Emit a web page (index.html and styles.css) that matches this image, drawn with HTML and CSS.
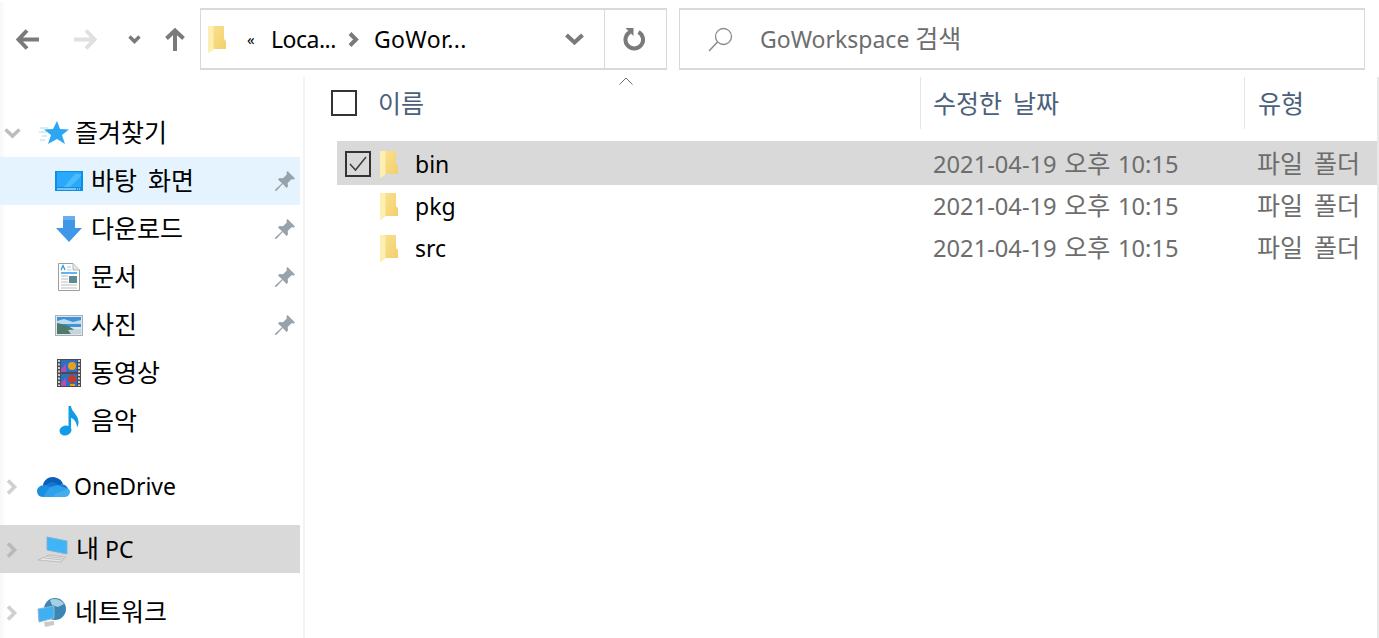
FILE: index.html
```html
<!DOCTYPE html>
<html lang="ko">
<head>
    <meta charset="UTF-8">
    <title>GoWorkspace</title>
    <link rel="stylesheet" href="styles.css">
</head>
<body>
    <svg class="defs" width="0" height="0">
        <defs>
            <linearGradient id="folderFill" x1="0" y1="0" x2="1" y2="1">
                <stop offset="0" stop-color="#f9e08f"/>
                <stop offset="1" stop-color="#f3cf6b"/>
            </linearGradient>
            <symbol id="folder" viewBox="0 0 18 27">
                <path d="M5 0H16V13L18 15V23H5Z" fill="url(#folderFill)"/>
                <path d="M0 0H5.500V23.500L1 27L0 26Z" fill="#fdeeb2"/>
            </symbol>
            <symbol id="pin" viewBox="0 0 20 20">
                <path d="M12.500 0L20 7.500L18.200 8.700L16.800 8L12.700 12L13 15.500L11.500 17L7.800 12.900L1.500 19.800L0 20L.2 18.500L7 12.200L3 8.500L4.500 7L8 7.300L12 3.200L11.300 1.800Z" fill="#98a2ab"/>
            </symbol>
        </defs>
    </svg>

    <div class="window">
        <div class="toolbar">
            <div class="nav">
                <span class="nav-btn nav-back">
                    <svg width="23" height="21" viewBox="0 0 23 21"><path d="M11 1.500L2.500 10.500L11 19.500M3 10.500H23" fill="none" stroke="#7a7a7a" stroke-width="4"/></svg>
                </span>
                <span class="nav-btn nav-forward">
                    <svg width="23" height="21" viewBox="0 0 23 21"><path d="M12 1.500L20.500 10.500L12 19.500M20 10.500H0" fill="none" stroke="#e0e0e0" stroke-width="4"/></svg>
                </span>
                <span class="nav-btn nav-recent">
                    <svg width="13" height="9" viewBox="0 0 13 9"><path d="M1.500 1.500L6.500 6.500L11.500 1.500" fill="none" stroke="#7a7a7a" stroke-width="3.400"/></svg>
                </span>
                <span class="nav-btn nav-up">
                    <svg width="20" height="23" viewBox="0 0 20 23"><path d="M1.500 10.500L10 2.500L18.500 10.500M10 3V23" fill="none" stroke="#7a7a7a" stroke-width="4"/></svg>
                </span>
            </div>

            <div class="address">
                <svg class="address-folder" width="18" height="27"><use href="#folder"/></svg>
                <span class="crumb-more">«</span>
                <span class="crumb crumb-first">Loca...</span>
                <svg class="crumb-sep" width="11" height="15" viewBox="0 0 11 15"><path d="M2 1.500L8 7.500L2 13.500" fill="none" stroke="#7a7a7a" stroke-width="4"/></svg>
                <span class="crumb crumb-last">GoWor...</span>
                <svg class="address-drop" width="19" height="12" viewBox="0 0 19 12"><path d="M1.500 2L9.500 9.500L17.500 2" fill="none" stroke="#7a7a7a" stroke-width="4"/></svg>
                <span class="refresh">
                    <svg width="22" height="24" viewBox="0 0 22 24"><path d="M7 5A8.800 8.800 0 1 0 15.500 5" fill="none" stroke="#7a7a7a" stroke-width="4"/><path d="M2.500 1H10.500V9Z" fill="#7a7a7a"/></svg>
                </span>
            </div>

            <div class="search">
                <svg width="26" height="25" viewBox="0 0 26 25"><circle cx="15.500" cy="9.500" r="8" fill="none" stroke="#8a8a8a" stroke-width="1.300"/><path d="M9.500 15L1 24" stroke="#8a8a8a" stroke-width="1.500"/></svg>
                <span class="search-text">GoWorkspace <span class="ko">검색</span></span>
            </div>
        </div>

        <div class="main">
            <nav class="sidebar">
                <div class="side-row side-top side-first">
                    <svg class="expander" width="17" height="11" viewBox="0 0 17 11"><path d="M1.500 1.500L8.500 8L15.500 1.500" fill="none" stroke="#bdbdbd" stroke-width="3.500"/></svg>
                    <svg class="side-icon icon-star" width="30" height="24" viewBox="0 0 30 24">
                        <path d="M1 7H9M0 11H8M3 15H8M1 19H6" stroke="#a9dcf8" stroke-width="1"/>
                        <path d="M18 0L21 8L30 8.500L23 14L26 23L18 18L9 23L12 14L5 8.500L14 8Z" fill="#2ea7f2"/>
                    </svg>
                    <span><span class="ko">즐겨찾기</span></span>
                </div>
                <div class="side-row side-child is-hover">
                    <svg class="side-icon" width="28" height="20" viewBox="0 0 28 20">
                        <rect width="28" height="20" fill="#0d8fe8"/>
                        <path d="M2 1H26V16H2Z" fill="#2aa9fb"/>
                        <path d="M9 16L20 3H26V5L15 16Z" fill="#4cbcfd"/>
                        <path d="M2 18H26" stroke="#e8f6ff" stroke-width="1" stroke-dasharray="19 1 1 1 1 1"/>
                    </svg>
                    <span><span class="ko">바탕 화면</span></span>
                    <svg class="pin" width="20" height="20"><use href="#pin"/></svg>
                </div>
                <div class="side-row side-child">
                    <svg class="side-icon" width="28" height="26" viewBox="0 0 26 26">
                        <path d="M7 0H19V12H26L13 26L0 12H7Z" fill="#3f97e8"/>
                        <path d="M7 0H19V4H7Z" fill="#66aeee"/>
                    </svg>
                    <span><span class="ko">다운로드</span></span>
                    <svg class="pin" width="20" height="20"><use href="#pin"/></svg>
                </div>
                <div class="side-row side-child">
                    <svg class="side-icon icon-doc" width="22" height="28" viewBox="0 0 22 28">
                        <path d="M.5 .5H15L21.500 7V27.500H.5Z" fill="#fff" stroke="#9d9d9d"/>
                        <path d="M15 .5V7H21.500" fill="#e6e6e6" stroke="#b5b5b5"/>
                        <path d="M3 10H19" stroke="#2e9be8" stroke-width="1.500"/>
                        <path d="M3 7L5 2.500L7 7" fill="none" stroke="#2e9be8" stroke-width="1.300"/>
                        <path d="M9 4H13M9 7H13" stroke="#9fcdef"/>
                        <path d="M3 13H10M3 16H10M3 19H10M3 22H19M3 25H19" stroke="#bdbdbd"/>
                        <rect x="11" y="13" width="8" height="7" fill="#5f8a93"/>
                    </svg>
                    <span><span class="ko">문서</span></span>
                    <svg class="pin" width="20" height="20"><use href="#pin"/></svg>
                </div>
                <div class="side-row side-child">
                    <svg class="side-icon" width="28" height="21" viewBox="0 0 28 21">
                        <rect x=".5" y=".5" width="27" height="20" fill="#dfe5e9" stroke="#a9b1b7"/>
                        <rect x="2" y="2" width="24" height="10" fill="#3f93d6"/>
                        <path d="M2 6L9 4L18 7L26 5V9H2Z" fill="#bcdcf0"/>
                        <path d="M2 8L11 10L20 15L26 15V19H2Z" fill="#4d7a6c"/>
                        <path d="M13 15L26 14V19H16Z" fill="#c4d5dc"/>
                    </svg>
                    <span><span class="ko">사진</span></span>
                    <svg class="pin" width="20" height="20"><use href="#pin"/></svg>
                </div>
                <div class="side-row side-child">
                    <svg class="side-icon icon-film" width="24" height="28" viewBox="0 0 24 28">
                        <rect width="24" height="28" fill="#4b4b4b"/>
                        <path d="M2 1V27M22 1V27" stroke="#cfcfcf" stroke-width="2" stroke-dasharray="2 1.500"/>
                        <rect x="4" y="1" width="16" height="12" fill="#2c6fc4"/>
                        <rect x="4" y="15" width="16" height="12" fill="#2c6fc4"/>
                        <circle cx="15" cy="7" r="4" fill="#e5a024"/>
                        <circle cx="15" cy="20" r="4" fill="#c9382b"/>
                        <path d="M4 10L9 5V13H4Z" fill="#b24fb5"/>
                        <path d="M4 24L9 19V27H4Z" fill="#b24fb5"/>
                        <path d="M13 25H18V27H13Z" fill="#e5a024"/>
                    </svg>
                    <span><span class="ko">동영상</span></span>
                </div>
                <div class="side-row side-child">
                    <svg class="side-icon icon-note" width="20" height="30" viewBox="0 0 20 30">
                        <ellipse cx="6.500" cy="24.500" rx="6" ry="5" fill="#0f9de8" transform="rotate(-15 6.500 24.500)"/>
                        <path d="M9.500 0H12C12 5 19.500 9 19.500 16C19.500 18 19 20 18 21.500C18 17 15.500 13 12 12V25H9.500Z" fill="#0f9de8"/>
                    </svg>
                    <span><span class="ko">음악</span></span>
                </div>

                <div class="side-row side-top side-group side-group-first">
                    <svg class="expander expander-right" width="12" height="16" viewBox="0 0 12 16"><path d="M2 1.500L8.500 8L2 14.500" fill="none" stroke="#d0d0d0" stroke-width="3.600"/></svg>
                    <svg class="side-icon icon-cloud" width="33" height="21" viewBox="0 0 33 21">
                        <path d="M6 9C7 3 14 -1 20 2C23 3 25 5 26 8L12 14L6 11Z" fill="#0a5fb8"/>
                        <path d="M10 8C14 5 19 6 21 9C25 7 30 9 31 13L17 18L7 12Z" fill="#0f78d4"/>
                        <path d="M8 9C3 9 0 12 0 15C0 18 2 21 6 21H16L21 13L13 11C12 10 10 9 8 9Z" fill="#1b8ee0"/>
                        <path d="M6 21H28C31 21 33 18 33 15.500C33 14 32 13 31 12.500L21 9L13 11Z" fill="#31a4ec" opacity=".9"/>
                    </svg>
                    <span>OneDrive</span>
                </div>
                <div class="side-row side-top side-group is-selected">
                    <svg class="expander expander-right" width="12" height="16" viewBox="0 0 12 16"><path d="M2 1.500L8.500 8L2 14.500" fill="none" stroke="#b9b9b9" stroke-width="3.600"/></svg>
                    <svg class="side-icon" width="33" height="28" viewBox="0 0 33 28">
                        <path d="M10 2L30 6V19L10 15Z" fill="#3fb4f7" stroke="#7fb3d1"/>
                        <path d="M12 20L29 22L24 27L1 25Z" fill="#e9e9e9" stroke="#b5b5b5" stroke-width=".8"/>
                        <path d="M7 23L25 25M10 21.500L27 23.500" stroke="#b5b5b5" stroke-width=".8"/>
                    </svg>
                    <span><span class="ko">내</span> PC</span>
                </div>
                <div class="side-row side-top side-group">
                    <svg class="expander expander-right" width="12" height="16" viewBox="0 0 12 16"><path d="M2 1.500L8.500 8L2 14.500" fill="none" stroke="#d0d0d0" stroke-width="3.600"/></svg>
                    <svg class="side-icon icon-net" width="30" height="29" viewBox="0 0 30 29">
                        <circle cx="18" cy="11" r="11" fill="#3c86b3"/>
                        <path d="M13 2C17 0 24 1 27 6L21 9L15 7Z" fill="#a7cfe4"/>
                        <path d="M1 11L17 8V20L2 24Z" fill="#3fb0f2" stroke="#8fb7cf"/>
                        <path d="M7 24L17 23V27L8 29Z" fill="#c9c9c9"/>
                    </svg>
                    <span><span class="ko">네트워크</span></span>
                </div>
            </nav>

            <section class="content">
                <svg class="sort-caret" width="14" height="8" viewBox="0 0 14 8"><path d="M.5 7.500L7 1L13.500 7.500" fill="none" stroke="#6e6e6e"/></svg>
                <div class="file-header">
                    <span class="check-col"><span class="checkbox"></span></span>
                    <span class="col col-name"><span class="ko">이름</span></span>
                    <span class="col col-date"><span class="ko">수정한 날짜</span></span>
                    <span class="col col-type"><span class="ko">유형</span></span>
                </div>
                <div class="file-list">
                    <div class="file-row is-selected">
                        <span class="checkbox checkbox-row">
                            <svg width="22" height="22" viewBox="0 0 22 22"><path d="M3 11L8.500 17L19 4" fill="none" stroke="#3c3c3c" stroke-width="1.500"/></svg>
                        </span>
                        <svg class="file-icon" width="18" height="27"><use href="#folder"/></svg>
                        <span class="file-name">bin</span>
                        <span class="file-date">2021-04-19 <span class="ko">오후</span> 10:15</span>
                        <span class="file-type"><span class="ko">파일 폴더</span></span>
                    </div>
                    <div class="file-row">
                        <svg class="file-icon" width="18" height="27"><use href="#folder"/></svg>
                        <span class="file-name">pkg</span>
                        <span class="file-date">2021-04-19 <span class="ko">오후</span> 10:15</span>
                        <span class="file-type"><span class="ko">파일 폴더</span></span>
                    </div>
                    <div class="file-row">
                        <svg class="file-icon" width="18" height="27"><use href="#folder"/></svg>
                        <span class="file-name">src</span>
                        <span class="file-date">2021-04-19 <span class="ko">오후</span> 10:15</span>
                        <span class="file-type"><span class="ko">파일 폴더</span></span>
                    </div>
                </div>
            </section>
        </div>
    </div>
</body>
</html>
```
FILE: styles.css
```css
* {
    box-sizing: border-box;
}
html, body {
    height: 100%;
}
body {
    margin: 0;
    overflow: hidden;
    background-color: #fff;
    color: #000;
    font-family: "Noto Sans", "Noto Sans CJK KR", sans-serif;
    font-size: 23px;
}
.defs {
    position: absolute;
}
svg {
    display: block;
    flex: none;
}
/* hangul runs wider than the latin next to it */
.ko {
    font-family: "Noto Sans CJK KR", sans-serif;
    font-size: 25px;
    word-spacing: 4px;
    line-height: 1;
}
.window {
    height: 100%;
    padding-top: 2px;
    background: linear-gradient(#e5e5e5, #e5e5e5) 0 2px / 100% 1px no-repeat;
}

/* toolbar */
.toolbar {
    display: flex;
    height: 75px;
    padding-top: 6px;
    background: linear-gradient(90deg, #f7f7f7, #fff 6px);
}
.nav {
    display: grid;
    grid-template-columns: 55px 60px 38px 44px;
    width: 200px;
    height: 62px;
    align-items: center;
    justify-items: center;
}
.address {
    display: flex;
    align-items: center;
    width: 467px;
    height: 62px;
    border: 1px solid #d9d9d9;
    border-width: 2px 1px;
    background-color: #fff;
    padding-left: 7px;
}
.crumb-more {
    width: 14px;
    margin-left: 21px;
    font-size: 15px;
    line-height: 1;
}
.crumb-first {
    margin-left: 10px;
    letter-spacing: -.5px;
}
.crumb-last {
    letter-spacing: .4px;
}
.crumb-sep {
    margin: 0 15px 0 12px;
}
.address-drop {
    margin-left: auto;
    margin-right: 20px;
}
.refresh {
    display: flex;
    align-items: center;
    justify-content: center;
    width: 62px;
    height: 100%;
    padding-right: 4px;
    border-left: 1px solid #d9d9d9;
}
.search {
    display: flex;
    align-items: center;
    width: 686px;
    height: 62px;
    margin-left: 12px;
    padding-left: 28px;
    border: 1px solid #d9d9d9;
    border-width: 2px 1px;
    color: #6d6d6d;
}
.search-text {
    margin-left: 26px;
}

/* layout below toolbar */
.main {
    display: flex;
    height: 561px;
}

/* navigation pane */
.sidebar {
    width: 305px;
    flex: none;
    padding: 32px 3px 0 0;
    border-right: 2px solid #f3f3f3;
    background: linear-gradient(90deg, #f7f7f7, #fff 6px);
}
.side-row {
    display: flex;
    align-items: center;
    height: 48px;
    white-space: nowrap;
}
.side-top {
    position: relative;
    padding-left: 37px;
}
.side-top .side-icon {
    margin-right: 6px;
}
.side-top .icon-cloud {
    margin-right: 4px;
}
.side-top .icon-net {
    margin-right: 8px;
}
.side-child {
    padding-left: 55px;
}
.side-child .side-icon {
    margin-right: 8px;
}
.expander {
    position: absolute;
    left: 4px;
    top: 19px;
}
.expander-right {
    left: 6px;
    top: 17px;
}
.side-group {
    margin-top: 15px;
}
.side-group-first {
    margin-top: 17px;
}
.side-top .icon-star {
    margin-left: 2px;
    margin-right: 6px;
}
.side-child .icon-doc {
    margin-left: 3px;
    margin-right: 11px;
}
.side-child .icon-film {
    margin-left: 2px;
    margin-right: 10px;
}
.side-child .icon-note {
    margin-left: 4px;
    margin-right: 12px;
}
.pin {
    margin-left: auto;
    margin-right: 5px;
}
.is-hover {
    background-color: #e5f3ff;
}
.is-selected {
    background-color: #d9d9d9;
}

/* file list */
.content {
    position: relative;
    flex: 1;
    border-right: 2px solid #e8e8e8;
}
.sort-caret {
    position: absolute;
    left: 314px;
    top: 0;
}
.file-header {
    display: grid;
    grid-template-columns: 73px 542px 324px 1fr;
    height: 52px;
    align-items: stretch;
    color: #4c607a;
}
.check-col {
    display: flex;
    align-items: center;
    padding-left: 26px;
}
.col {
    display: flex;
    align-items: center;
    padding-bottom: 2px;
}
.col-date, .col-type {
    padding-left: 12px;
    border-left: 1px solid #e5e5e5;
}
.col-type {
    padding-left: 13px;
}
.checkbox {
    display: block;
    width: 26px;
    height: 26px;
    border: 2px solid #333;
    background-color: #fff;
}
.file-list {
    margin: 12px 0 0 32px;
}
.file-row {
    display: grid;
    grid-template-columns: 43px 35px 518px 324px 1fr;
    height: 42px;
    align-items: center;
    white-space: nowrap;
}
.file-row.is-selected {
    height: 44px;
    padding-top: 2px;
}
.file-row .file-icon {
    grid-column: 2;
}
.checkbox-row {
    grid-column: 1;
    margin-left: 8px;
    background-color: transparent;
}
.file-date, .file-type {
    color: #6d6d6d;
}
.file-date {
    font-size: 23.7px;
    word-spacing: 1.5px;
}
```
